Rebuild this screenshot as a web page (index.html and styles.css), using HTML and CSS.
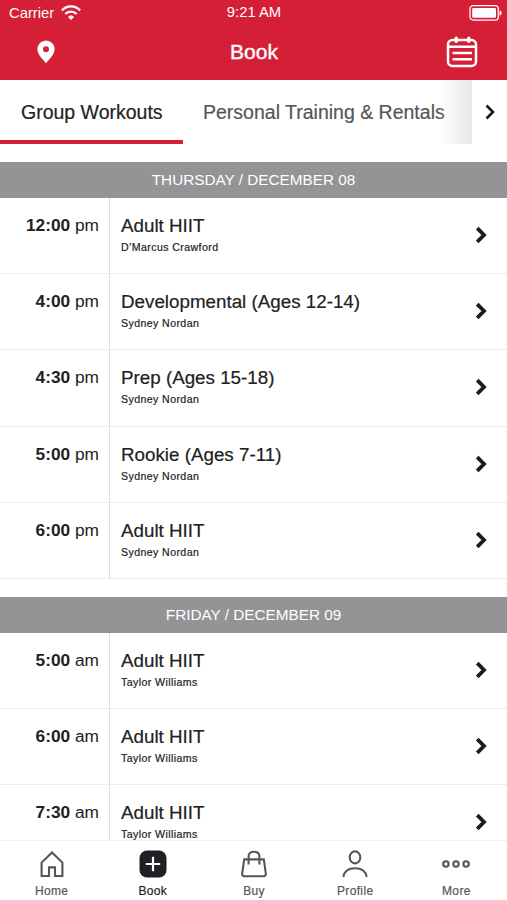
FILE: index.html
```html
<!DOCTYPE html>
<html lang="en">
  <head>
    <title>Book</title>
    <meta charset="utf-8" />
    <meta name="viewport" content="width=device-width, initial-scale=1" />
    <link rel="stylesheet" href="styles.css">
  </head>
  <body>
    <svg class="sprite" width="0" height="0">
      <symbol id="chevron" viewBox="0 0 12 18">
        <path d="M2.2 2.2 L9 9 L2.2 15.8" fill="none" stroke="currentColor" stroke-width="3.8"/>
      </symbol>
    </svg>

    <div class="app">
      <header class="header">
        <div class="status">
          <span class="carrier">Carrier
            <svg width="20" height="15" viewBox="0 0 20 15">
              <path d="M.9 5.4 C6 .1 14 .1 19.1 5.4 M4.3 9 C7.5 5.8 12.5 5.8 15.7 9" fill="none" stroke="#fff" stroke-width="2.3"/>
              <path d="M10 15 L7.2 12.2 C7.4 10 12.6 10 12.8 12.2 Z" fill="#fff"/>
            </svg>
          </span>
          <span class="clock">9:21 AM</span>
          <svg class="battery" width="33" height="16" viewBox="0 0 33 16">
            <rect x="1" y=".7" width="28.3" height="14.4" rx="3.2" fill="none" stroke="#fff" stroke-width="1.3"/>
            <rect x="3.2" y="3" width="23.8" height="9.8" rx="1.3" fill="#fff"/>
            <path d="M30.6 5.3 Q32.6 6 32.6 8 Q32.6 10 30.6 10.7 Z" fill="#fff"/>
          </svg>
        </div>
        <div class="title-bar">
          <svg class="pin" width="18" height="24" viewBox="0 0 18 24">
            <path fill="#fff" fill-rule="evenodd" d="M9 .5 A8.6 8.6 0 0 0 .4 9.1 C.4 14.5 5.3 18.8 9 23.2 C12.7 18.8 17.6 14.5 17.6 9.1 A8.6 8.6 0 0 0 9 .5 Z M9 6.3 A3 3 0 1 1 9 12.3 A3 3 0 1 1 9 6.3 Z"/>
          </svg>
          <h1>Book</h1>
          <svg class="calendar" width="32" height="32" viewBox="0 0 32 32" fill="none" stroke="#fff" stroke-width="2.5">
            <rect x="2" y="4" width="28" height="26" rx="4.5"/>
            <path d="M2 10.8 H30 M6.5 17 H26 M6.5 23.2 H26"/>
            <path d="M10.2 2.2 V5.4 M22.8 2.2 V5.4" stroke-width="3.2" stroke-linecap="round"/>
          </svg>
        </div>
      </header>

      <nav class="tabs">
        <a class="tab active">Group Workouts</a>
        <a class="tab">Personal Training &amp; Rentals</a>
        <span class="fade"></span>
        <svg class="next" width="10" height="16" viewBox="0 0 10 16">
          <path d="M1.5 1.5 L8 8 L1.5 14.5" fill="none" stroke="#111" stroke-width="2.5"/>
        </svg>
      </nav>

      <main class="schedule">
        <section class="day">
          <h2>THURSDAY / DECEMBER 08</h2>
          <div class="row">
            <div class="time"><b>12:00</b> pm</div>
            <div class="info"><p class="name">Adult HIIT</p><p class="coach">D’Marcus Crawford</p></div>
            <svg class="arrow"><use href="#chevron"/></svg>
          </div>
          <div class="row">
            <div class="time"><b>4:00</b> pm</div>
            <div class="info"><p class="name">Developmental (Ages 12-14)</p><p class="coach">Sydney Nordan</p></div>
            <svg class="arrow"><use href="#chevron"/></svg>
          </div>
          <div class="row">
            <div class="time"><b>4:30</b> pm</div>
            <div class="info"><p class="name">Prep (Ages 15-18)</p><p class="coach">Sydney Nordan</p></div>
            <svg class="arrow"><use href="#chevron"/></svg>
          </div>
          <div class="row">
            <div class="time"><b>5:00</b> pm</div>
            <div class="info"><p class="name">Rookie (Ages 7-11)</p><p class="coach">Sydney Nordan</p></div>
            <svg class="arrow"><use href="#chevron"/></svg>
          </div>
          <div class="row">
            <div class="time"><b>6:00</b> pm</div>
            <div class="info"><p class="name">Adult HIIT</p><p class="coach">Sydney Nordan</p></div>
            <svg class="arrow"><use href="#chevron"/></svg>
          </div>
        </section>

        <section class="day">
          <h2>FRIDAY / DECEMBER 09</h2>
          <div class="row">
            <div class="time"><b>5:00</b> am</div>
            <div class="info"><p class="name">Adult HIIT</p><p class="coach">Taylor Williams</p></div>
            <svg class="arrow"><use href="#chevron"/></svg>
          </div>
          <div class="row">
            <div class="time"><b>6:00</b> am</div>
            <div class="info"><p class="name">Adult HIIT</p><p class="coach">Taylor Williams</p></div>
            <svg class="arrow"><use href="#chevron"/></svg>
          </div>
          <div class="row">
            <div class="time"><b>7:30</b> am</div>
            <div class="info"><p class="name">Adult HIIT</p><p class="coach">Taylor Williams</p></div>
            <svg class="arrow"><use href="#chevron"/></svg>
          </div>
        </section>
      </main>

      <nav class="bottom-nav">
        <a class="nav-item">
          <svg width="28" height="28" viewBox="0 0 28 28">
            <path d="M3.6 26 V12.6 L14 2.4 L24.4 12.6 V26 H17 V17.4 H11 V26 Z"/>
          </svg>
          Home
        </a>
        <a class="nav-item current">
          <svg width="28" height="28" viewBox="0 0 28 28">
            <rect class="solid" x=".5" y=".5" width="27" height="27" rx="7.5"/>
            <path class="plus" d="M14 6.8 V21.2 M6.8 14 H21.2"/>
          </svg>
          Book
        </a>
        <a class="nav-item">
          <svg width="28" height="28" viewBox="0 0 28 28">
            <path d="M4.2 9.4 H23.8 L25.8 23.4 Q26.2 26.2 23.4 26.2 H4.6 Q1.8 26.2 2.2 23.4 Z"/>
            <path d="M8.6 14.5 V6.5 Q8.6 1.8 14 1.8 Q19.4 1.8 19.4 6.5 V14.5"/>
          </svg>
          Buy
        </a>
        <a class="nav-item">
          <svg width="28" height="28" viewBox="0 0 28 28">
            <ellipse cx="14" cy="7.4" rx="5.3" ry="6"/>
            <path d="M2.3 27 Q3.6 18.2 14 18.2 Q24.4 18.2 25.7 27"/>
          </svg>
          Profile
        </a>
        <a class="nav-item">
          <svg width="28" height="28" viewBox="0 0 28 28">
            <circle cx="3.9" cy="14" r="2.7"/>
            <circle cx="14" cy="14" r="2.7"/>
            <circle cx="24.1" cy="14" r="2.7"/>
          </svg>
          More
        </a>
      </nav>
    </div>
  </body>
</html>
```
FILE: styles.css
```css
* {
    box-sizing: border-box;
}

body {
    margin: 0;
    background-color: #fff;
    color: #222;
    font-family: "Liberation Sans", Arial, sans-serif;
}

h1, h2, p {
    margin: 0;
    font-weight: normal;
}

svg {
    display: block;
    flex: none;
}

.sprite {
    position: absolute;
}

.app {
    display: flex;
    flex-direction: column;
    height: 900px;
    overflow: hidden;
}

/* header */
.header {
    height: 80px;
    flex: none;
    background-color: #d51f37;
    color: #fff;
}

.status {
    display: grid;
    grid-template-columns: 1fr auto 1fr;
    align-items: center;
    height: 25px;
    padding: 0 5px 0 9px;
    font-size: 14.8px;
}

.carrier {
    display: flex;
    align-items: center;
    gap: 7px;
}

.clock {
    padding-right: 3px;
    margin-top: -1px;
}

.battery {
    justify-self: end;
}

.title-bar {
    display: flex;
    align-items: center;
    justify-content: space-between;
    height: 54px;
    padding: 0 29px 0 37px;
}

.title-bar h1 {
    padding-left: 7px;
    font-size: 21px;
    -webkit-text-stroke: 0.4px #fff;
}

/* tabs */
.tabs {
    display: flex;
    flex: none;
    align-items: center;
    height: 64px;
    margin-bottom: 18px;
    font-size: 19.5px;
}

.tab {
    height: 64px;
    padding: 0 20px 0 20px;
    line-height: 64px;
    color: #555659;
    white-space: nowrap;
    -webkit-text-stroke: 0.2px currentColor;
}

.tab.active {
    width: 183px;
    padding-left: 21px;
    border-bottom: 4px solid #d51f37;
    color: #222;
}

.tabs .fade {
    width: 34px;
    height: 64px;
    margin-left: auto;
    background: linear-gradient(to right, rgba(230, 230, 230, 0), #e8e8e8);
}

.tab:nth-child(2) {
    width: 255px;
    padding-right: 0;
    margin-right: -12px;
}

.next {
    margin: 0 12px 0 13px;
}

/* schedule */
.schedule {
    flex: 1;
    min-height: 0;
    overflow: hidden;
}

.day {
    margin-bottom: 18px;
}

.day h2 {
    height: 36px;
    background-color: #949496;
    color: #fff;
    font-size: 15.3px;
    line-height: 36px;
    text-align: center;
}

.row {
    display: flex;
    height: 76.2px;
    border-bottom: 1px solid #ececee;
}

.time {
    width: 110px;
    padding: 17px 10px 0 0;
    border-right: 1px solid #dedee2;
    font-size: 17.3px;
    line-height: 20px;
    text-align: right;
}

.info {
    flex: 1;
    padding: 17px 0 0 11px;
}

.name {
    font-size: 18.8px;
    line-height: 22px;
    -webkit-text-stroke: 0.2px currentColor;
}

.coach {
    margin-top: 4px;
    font-size: 10.6px;
    line-height: 13px;
    letter-spacing: 0.4px;
    -webkit-text-stroke: 0.2px currentColor;
}

.arrow {
    width: 12px;
    height: 18px;
    margin: 28px 20px 0 0;
    color: #1c1c1e;
}

/* bottom navigation */
.bottom-nav {
    display: grid;
    grid-template-columns: repeat(5, 1fr);
    flex: none;
    height: 60px;
    padding-left: 1px;
    border-top: 1px solid #f0f0f2;
    background-color: #fff;
}

.nav-item {
    display: flex;
    flex-direction: column;
    align-items: center;
    gap: 6px;
    padding-top: 9px;
    color: #55565a;
    font-size: 12px;
    line-height: 14px;
    letter-spacing: 0.35px;
    -webkit-text-stroke: 0.2px currentColor;
}

.nav-item svg {
    fill: none;
    stroke: #55565a;
    stroke-width: 2.1;
}

.nav-item.current {
    color: #222;
}

.nav-item .solid {
    fill: #202024;
    stroke: none;
}

.nav-item .plus {
    stroke: #fff;
    stroke-width: 2.2;
}
```
